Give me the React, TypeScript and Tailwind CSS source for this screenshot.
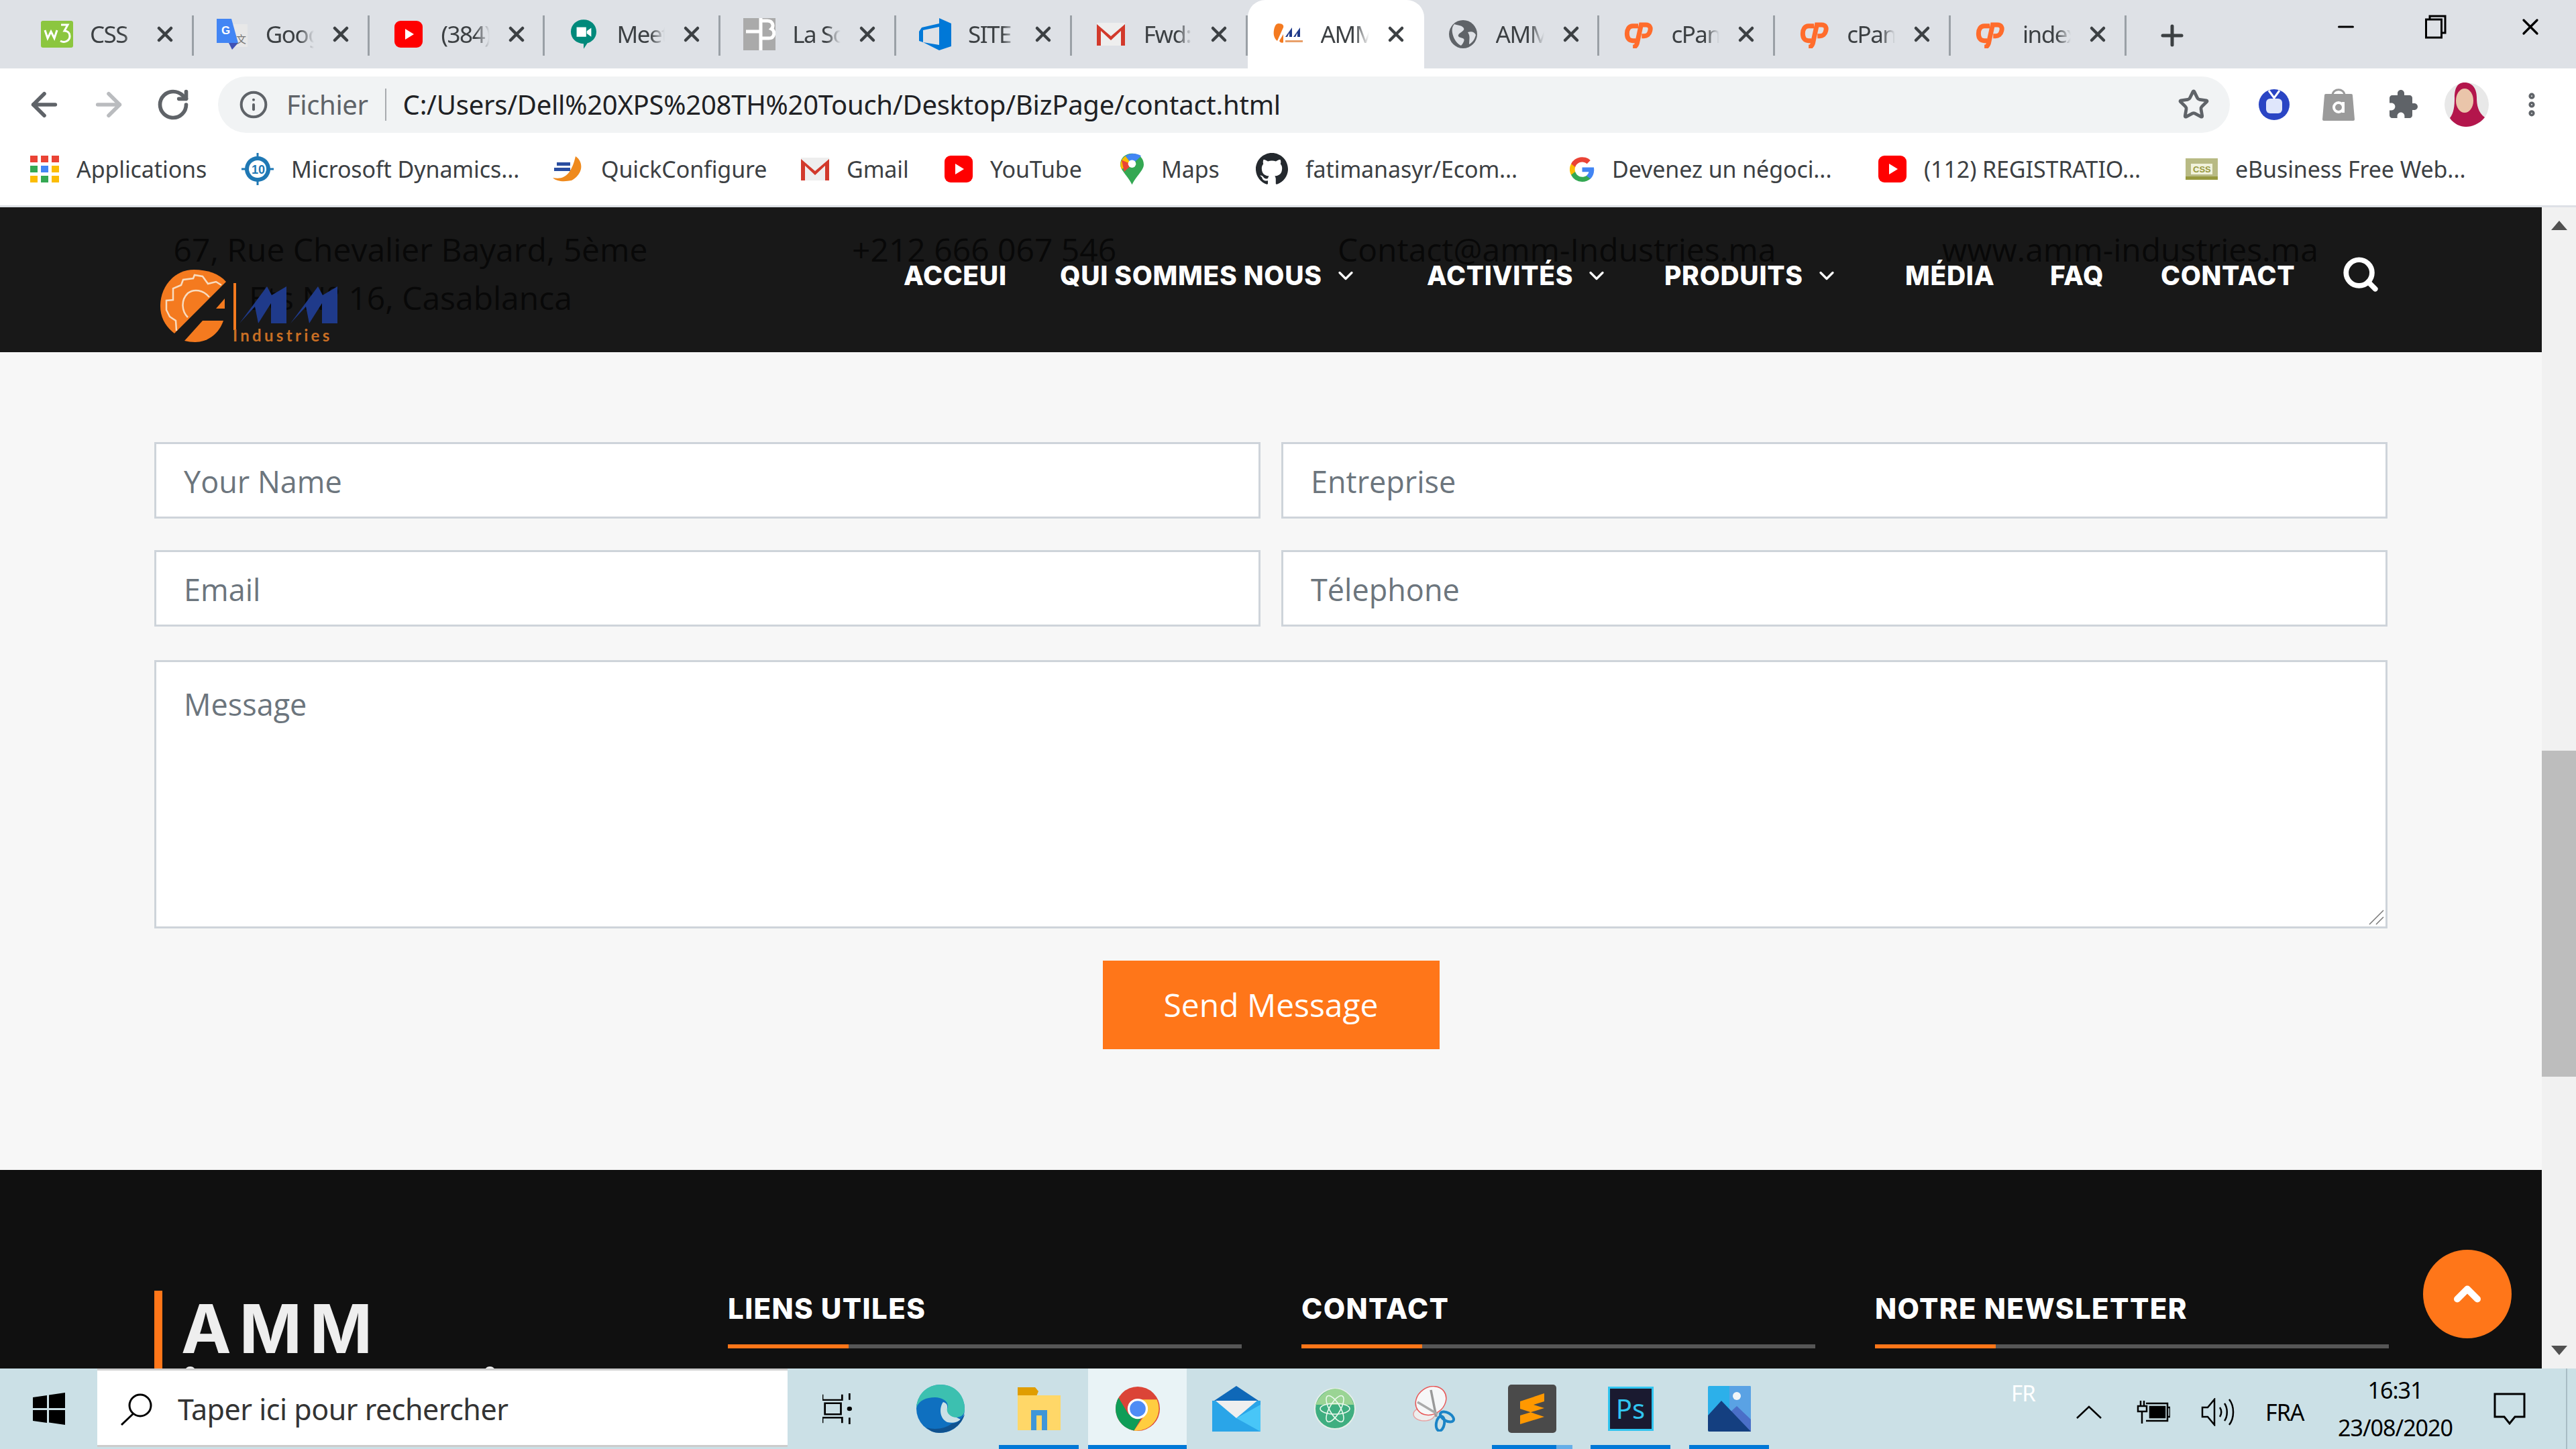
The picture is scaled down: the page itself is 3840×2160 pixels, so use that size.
import React from "react";
import { ArrowLeft, ArrowRight, RotateCw, Info, Star, MoreVertical, Plus, X, Minus, ChevronDown, ChevronUp, Search } from "lucide-react";

const CP = () => (
  <svg viewBox="0 0 48 48" className="w-[48px] h-[42px]" fill="none" stroke="#ff6c2c" strokeWidth="8">
    <path d="M24 10H15C8 10 5 16 5 23s3 12 10 12h5" />
    <path d="M15 46c5 0 6-3 7-6l7-32h8c7 0 9 5 7 11-1 5-5 8-10 8h-4" />
  </svg>
);
const YT = () => (
  <svg viewBox="0 0 42 40" className="w-[42px] h-[40px]"><rect x="0" y="0" width="42" height="40" rx="9" fill="#ff0000" /><path d="M16 12 29 20 16 28z" fill="#fff" /></svg>
);
const GM = () => (
  <svg viewBox="0 0 42 34" className="w-[42px] h-[34px]"><path d="M0 0h42v34H0z" fill="#eee" /><path d="M0 34V2l21 18L42 2v32h-6V12L21 26 6 12v22z" fill="#d2392b" /></svg>
);
const AMMmini = () => (
  <svg viewBox="0 0 44 32" className="w-[44px] h-[32px]">
    <path d="M8 0c6 0 8 3 7 6L6 26C1 22 0 16 1 10c1-6 3-10 7-10z" fill="#f47a20" />
    <path d="M9 26l6-10v12c-2 2-5 0-6-2z" fill="#f47a20" />
    <path d="M18 20 28 6v14h-4v-6l-3 6zM30 20 40 6v14h-4v-6l-3 6z" fill="#1f3a8a" />
    <rect x="18" y="25" width="26" height="3" fill="#e9a06a" />
  </svg>
);

const tabs: { label: string; icon: React.ReactNode; active?: boolean }[] = [
  { label: "CSS", icon: <svg viewBox="0 0 48 40" className="w-[48px] h-[40px]"><rect width="48" height="40" rx="3" fill="#8cc63f" /><path d="M6 14l4 12 5-10 5 10 4-12" stroke="#fff" strokeWidth="3" fill="none" /><path d="M30 6h10l-5 9c5 0 8 3 8 8 0 6-7 11-14 7" stroke="#fff" strokeWidth="3" fill="none" /></svg> },
  { label: "Google", icon: <svg viewBox="0 0 48 46" className="w-[48px] h-[46px]"><path d="M18 8h28v34H24z" fill="#e8e8e8" /><path d="M0 0h22l10 36H0z" fill="#4285f4" /><path d="M18 36h14l-9 10z" fill="#3f51b5" /><text x="7" y="23" fontSize="17" fontWeight="700" fill="#fff" fontFamily="Liberation Sans">G</text><text x="29" y="36" fontSize="15" fill="#777" fontFamily="Noto Sans CJK SC">文</text></svg> },
  { label: "(384)", icon: <YT /> },
  { label: "Meet", icon: <svg viewBox="0 0 40 46" className="w-[38px] h-[44px]"><path d="M20 0c11 0 20 8 20 19 0 10-7 16-14 18l-6 9V38C8 37 0 30 0 19 0 8 9 0 20 0z" fill="#00897b" /><path d="M9 12h15v15H9z" fill="#fff" /><path d="M25 18l7-5v14l-7-5z" fill="#fff" /></svg> },
  { label: "La Société", icon: <svg viewBox="0 0 48 48" className="w-[48px] h-[48px]"><rect width="48" height="48" fill="#aaa" /><path d="M26 0v48M4 20h22M26 4h10c8 0 10 8 6 12 6 3 5 14-4 14H26" stroke="#fff" strokeWidth="5" fill="none" /></svg> },
  { label: "SITE", icon: <svg viewBox="0 0 48 48" className="w-[48px] h-[48px]"><path d="M30 0v8L4 14 0 20v14l6 2V18l24-5v27L6 36l24 12 18-6V8z" fill="#0078d7" /></svg> },
  { label: "Fwd:", icon: <GM /> },
  { label: "AMM", icon: <AMMmini />, active: true },
  { label: "AMM", icon: <svg viewBox="0 0 42 42" className="w-[42px] h-[42px]"><circle cx="21" cy="21" r="21" fill="#5f6368" /><path d="M8 6c6 2 12 2 14 6s-6 6-8 10 6 4 8 6-2 8-4 10C8 34 0 14 8 6zM28 18c6-2 10 0 12 4-2 8-6 12-10 14 0-8 2-12-2-18z" fill="#dee1e6" /></svg> },
  { label: "cPanel", icon: <CP /> },
  { label: "cPanel", icon: <CP /> },
  { label: "index", icon: <CP /> },
];

const bookmarks: { w: string; label: string; icon: React.ReactNode }[] = [
  { w: "w-[315px]", label: "Applications", icon: <div className="grid grid-cols-3 gap-[5px] w-[43px]">{["#ea4335","#ea4335","#ea4335","#34a853","#4285f4","#fbbc04","#fbbc04","#34a853","#fbbc04"].map((c,i)=><span key={i} className="h-[10px]" style={{background:c}} />)}</div> },
  { w: "w-[462px]", label: "Microsoft Dynamics...", icon: <svg viewBox="0 0 48 48" className="w-[48px] h-[48px]"><circle cx="24" cy="24" r="19" fill="#1f78b4" /><circle cx="24" cy="24" r="13" fill="#fff" /><path d="M24 0v9M24 39v9M0 24h9M39 24h9" stroke="#1f78b4" strokeWidth="3" /><text x="15" y="31" fontSize="18" fontWeight="700" fill="#1f78b4" fontFamily="Liberation Sans">10</text></svg> },
  { w: "w-[372px]", label: "QuickConfigure", icon: <svg viewBox="0 0 48 38" className="w-[48px] h-[38px]"><path d="M36 0c12 8 12 26-6 36-10 2-22 2-28-4 12 2 26 2 34-32z" fill="#ef8a1d" /><rect x="8" y="9" width="20" height="5" fill="#2a4ea0" /><rect x="4" y="17" width="24" height="5" fill="#2a4ea0" /></svg> },
  { w: "w-[214px]", label: "Gmail", icon: <GM /> },
  { w: "w-[262px]", label: "YouTube", icon: <YT /> },
  { w: "w-[202px]", label: "Maps", icon: <svg viewBox="0 0 36 48" className="w-[35px] h-[48px]"><path d="M18 0c10 0 18 7 18 17 0 9-12 18-18 31C12 35 0 26 0 17 0 7 8 0 18 0z" fill="#34a853" /><path d="M8 4 18 17 2 24C-2 16 2 8 8 4z" fill="#fbbc04" /><path d="M8 4c6-5 18-5 24 0L18 17z" fill="#4285f4" /><path d="M2 10 18 17 6 28z" fill="#ea4335" /><circle cx="18" cy="16" r="6" fill="#fff" /></svg> },
  { w: "w-[468px]", label: "fatimanasyr/Ecom...", icon: <svg viewBox="0 0 24 24" className="w-[48px] h-[48px]"><path fill="#24292e" d="M12 0C5.4 0 0 5.4 0 12c0 5.3 3.4 9.8 8.2 11.4.6.1.8-.3.8-.6v-2.2c-3.3.7-4-1.4-4-1.4-.5-1.4-1.3-1.8-1.3-1.8-1.1-.7.1-.7.1-.7 1.2.1 1.8 1.2 1.8 1.2 1.1 1.8 2.8 1.3 3.5 1 .1-.8.4-1.3.8-1.6-2.7-.3-5.5-1.3-5.5-5.9 0-1.3.5-2.4 1.2-3.2-.1-.3-.5-1.5.1-3.2 0 0 1-.3 3.3 1.2a11.5 11.5 0 0 1 6 0c2.3-1.6 3.3-1.2 3.3-1.2.7 1.7.2 2.9.1 3.2.8.8 1.2 1.9 1.2 3.2 0 4.6-2.8 5.6-5.5 5.9.4.4.8 1.1.8 2.2v3.3c0 .3.2.7.8.6A12 12 0 0 0 24 12c0-6.6-5.4-12-12-12z" /></svg> },
  { w: "w-[460px]", label: "Devenez un négoci...", icon: <svg viewBox="0 0 24 24" className="w-[37px] h-[37px]"><path d="M23.5 12.3c0-.8-.1-1.6-.2-2.3H12v4.5h6.5a5.5 5.5 0 0 1-2.4 3.6v3h3.9c2.3-2.1 3.5-5.2 3.5-8.8z" fill="#4285f4" /><path d="M12 24c3.2 0 6-1.1 8-2.9l-3.9-3c-1.1.7-2.5 1.2-4.1 1.2-3.1 0-5.8-2.1-6.7-5H1.3v3.1A12 12 0 0 0 12 24z" fill="#34a853" /><path d="M5.3 14.3a7.2 7.2 0 0 1 0-4.6V6.6H1.3a12 12 0 0 0 0 10.8z" fill="#fbbc04" /><path d="M12 4.8c1.8 0 3.3.6 4.6 1.8L20 3.2A12 12 0 0 0 1.3 6.6l4 3.1c.9-2.8 3.6-4.9 6.7-4.9z" fill="#ea4335" /></svg> },
  { w: "w-[458px]", label: "(112) REGISTRATIO...", icon: <YT /> },
  { w: "w-[400px]", label: "eBusiness Free Web...", icon: <svg viewBox="0 0 48 32" className="w-[48px] h-[32px]"><rect width="48" height="32" fill="#b8ba84" /><rect x="8" y="8" width="32" height="16" fill="#f1f2dc" /><rect y="27" width="48" height="5" fill="#97993f" /><text x="11" y="21" fontSize="13" fontWeight="700" fill="#97993f" fontFamily="Liberation Sans">CSS</text></svg> },
];

const Tab = ({ t }: { t: (typeof tabs)[number] }) => (
  <div className={t.active ? "w-[263px] h-[102px] bg-white rounded-t-[26px] flex items-center pl-[36px] shrink-0" : "w-[261.800px] h-[102px] flex items-center pl-[34px] shrink-0 relative"}>
    <div className="w-[48px] h-[60px] flex items-center justify-center shrink-0">{t.icon}</div>
    <span className="ml-[25px] w-[72px] overflow-hidden whitespace-nowrap text-[35px] tracking-[-1.5px] text-[#3c4043] [mask-image:linear-gradient(90deg,#000_70%,transparent)]">{t.label}</span>
    <X className="ml-[22px] w-[36px] h-[40px] text-[#3c4043] shrink-0" strokeWidth={3} />
    {!t.active && <span className="absolute right-0 top-[23px] w-[3px] h-[60px] bg-[#9aa0a6]" />}
  </div>
);

const Logo = () => (
  <svg viewBox="0 0 265 110" className="w-[265px] h-[110px]">
    <path d="M50 0C70 0 88 6 98 18L21 95C8 85 0 72 0 54 0 24 22 0 50 0z" fill="#f47a1f" />
    <path d="M83 58 96 43V58z" fill="#f47a1f" />
    <path d="M63 76H94C88 94 72 108 52 108 46 108 41 107 36 106z" fill="#f47a1f" />
    <path d="M24 91 23 76 14 70 9 60V46L19 45V28L31 23 34 15 49 13 51 8 63 10 71 21 83 18 91 23M41 71C32 62 30 46 41 35 50 28 64 30 73 41" stroke="#f8dcc0" strokeWidth="2.500" fill="none" />
    <rect x="109" y="20" width="4" height="70" fill="#f47a1f" />
    <path d="M118 80 159 25 166 38 188 25V80H165V50L146 80 141 55ZM194 80 235 25 242 38 264 25V80H241V50L222 80 217 55Z" fill="#1f3a8a" />
    <text x="108" y="107" fontSize="24" letterSpacing="4.300" fill="#c96f24" fontFamily="Lato, sans-serif" fontWeight="700">Industries</text>
  </svg>
);

const Field = ({ label, className }: { label: string; className: string }) => (
  <div className={"bg-white border-[3px] border-[#ced4da] flex items-center pl-[41px] pt-[3px] text-[45px] text-[#6c757d] " + className}>{label}</div>
);

const NavItem = ({ label, w, arrow }: { label: string; w: string; arrow?: boolean }) => (
  <div className={"flex items-center shrink-0 " + w}>
    <span className="text-[39px] font-extrabold tracking-[0.7px] text-white whitespace-nowrap">{label}</span>
    {arrow && <ChevronDown className="ml-[14px] w-[42px] h-[36px] text-white" strokeWidth={2.2} />}
  </div>
);

const FootCol = ({ title }: { title: string }) => (
  <div className="w-[766px]">
    <h3 className="text-[42px] leading-[54px] font-extrabold tracking-[1.4px] text-white font-['Inter',sans-serif]">{title}</h3>
    <div className="mt-[26px] h-[6px] bg-[#565656]"><div className="h-full w-[180px] bg-[#ff7619]" /></div>
  </div>
);

const taskIcon = "flex items-center justify-center w-[147px] h-[120px] shrink-0 relative";
const Under = ({ cls }: { cls?: string }) => <span className={"absolute bottom-0 left-[14px] right-[14px] h-[6px] bg-[#0078d7] " + (cls ?? "")} />;

export default function App() {
  return (
    <div className="w-[3840px] h-[2160px] flex flex-col overflow-hidden bg-white font-['Noto_Sans','Open_Sans',sans-serif]">
      {/* tab strip */}
      <div className="h-[102px] bg-[#dee1e6] flex items-start pl-[27px] shrink-0">
        {tabs.map((t, i) => <Tab key={i} t={t} />)}
        <Plus className="ml-[44px] mt-[29px] w-[48px] h-[48px] text-[#3c4043]" strokeWidth={2.5} />
        <div className="ml-auto flex h-[80px] items-center text-black">
          <Minus className="w-[36px] h-[36px] mr-[100px]" strokeWidth={2} />
          <svg viewBox="0 0 32 36" className="w-[32px] h-[36px] mr-[105px]" fill="none" stroke="#000" strokeWidth="3"><rect x="1.500" y="7" width="23" height="27" /><path d="M7 7V2h23v25h-5" /></svg>
          <X className="w-[40px] h-[40px] mr-[48px]" strokeWidth={2} />
        </div>
      </div>

      {/* toolbar */}
      <div className="h-[96px] pt-[12px] flex items-start shrink-0 bg-white">
        <div className="flex items-center h-[84px] pl-[38px] gap-[40px] w-[325px]">
          <ArrowLeft className="w-[56px] h-[56px] text-[#5f6368]" strokeWidth={2.4} />
          <ArrowRight className="w-[56px] h-[56px] text-[#babcbf]" strokeWidth={2.4} />
          <RotateCw className="w-[52px] h-[52px] ml-[2px] text-[#5f6368]" strokeWidth={2.6} />
        </div>
        <div className="w-[2999px] h-[84px] rounded-full bg-[#f1f3f4] flex items-center pl-[31px] pr-[30px]">
          <Info className="w-[44px] h-[44px] text-[#5f6368]" strokeWidth={2.2} />
          <span className="ml-[27px] text-[40px] tracking-[-0.4px] text-[#5f6368]">Fichier</span>
          <span className="ml-[25px] w-[2px] h-[48px] bg-[#a8abaf]" />
          <span className="ml-[25px] text-[40px] tracking-[-0.25px] text-[#202124] whitespace-nowrap">C:/Users/Dell%20XPS%208TH%20Touch/Desktop/BizPage/contact.html</span>
          <Star className="ml-auto w-[48px] h-[48px] text-[#5f6368]" strokeWidth={2.4} />
        </div>
        <div className="flex items-center h-[84px] flex-1">
          <svg viewBox="0 0 46 48" className="ml-[43px] w-[46px] h-[48px]"><circle cx="23" cy="24" r="23" fill="#2a45c4" /><rect x="11" y="15" width="24" height="22" rx="6" fill="#dfe6fb" /><path d="M15 3l8 11 8-11" stroke="#fff" strokeWidth="3" fill="none" /></svg>
          <svg viewBox="0 0 48 48" className="ml-[49px] w-[48px] h-[48px]"><path d="M5 8h38q2 0 2 2l3 36q0 2-2 2H2q-2 0-2-2L3 10q0-2 2-2z" fill="#9a9a9a" /><path d="M15 10c0-11 18-11 18 0" stroke="#9a9a9a" strokeWidth="3" fill="none" /><circle cx="24" cy="28" r="7" stroke="#fff" strokeWidth="4" fill="none" /><path d="M31 20v16" stroke="#fff" strokeWidth="4" /></svg>
          <svg viewBox="0 0 24 24" className="ml-[48px] w-[48px] h-[48px] fill-[#5f6368]"><path d="M20.5 11H19V7c0-1.100-.9-2-2-2h-4V3.500C13 2.120 11.880 1 10.500 1S8 2.120 8 3.500V5H4c-1.100 0-1.990.9-1.990 2v3.800H3.500c1.490 0 2.700 1.210 2.700 2.700s-1.210 2.700-2.700 2.700H2V20c0 1.100.9 2 2 2h3.800v-1.500c0-1.490 1.210-2.700 2.700-2.700 1.490 0 2.700 1.210 2.700 2.700V22H17c1.100 0 2-.9 2-2v-4h1.500c1.380 0 2.500-1.120 2.500-2.500S21.880 11 20.500 11z" /></svg>
          <svg viewBox="0 0 66 66" className="ml-[38px] w-[66px] h-[66px]"><circle cx="33" cy="33" r="33" fill="#e8e8e8" /><path d="M30 0c12 0 18 10 18 22 0 12 2 22 12 30-8 10-20 14-28 14S14 62 8 53c6-8 7-18 7-30C15 10 18 0 30 0z" fill="#b3164c" /><ellipse cx="30" cy="27" rx="13" ry="18" fill="#eac5aa" /></svg>
          <MoreVertical className="ml-[42px] w-[44px] h-[48px] text-[#5f6368]" strokeWidth={3} />
        </div>
      </div>

      {/* bookmarks */}
      <div className="h-[108px] flex items-center pl-[45px] shrink-0 bg-white border-b-[3px] border-[#dee1e6] box-content">
        {bookmarks.map((b, i) => (
          <div key={i} className={"flex items-center shrink-0 " + b.w}>
            <div className="flex justify-start shrink-0">{b.icon}</div>
            <span className="ml-[26px] text-[34px] tracking-[-0.1px] text-[#3c4043] whitespace-nowrap">{b.label}</span>
          </div>
        ))}
      </div>

      {/* viewport */}
      <div className="h-[1731px] flex shrink-0 overflow-hidden">
        <div className="w-[3789px] h-full flex flex-col relative overflow-hidden bg-[#f7f7f7] font-['Open_Sans','Noto_Sans',sans-serif]">
          <header className="h-[216px] bg-[#181818] relative shrink-0 flex items-start pl-[1347px] pt-[70px]">
            <div className="absolute left-[0] top-0 w-full text-[#080808] text-[48px] leading-[72px] whitespace-nowrap">
              <div className="absolute left-[232px] top-[27px] w-[760px] text-center">67, Rue Chevalier Bayard, 5ème<br />Ets N° 16, Casablanca</div>
              <div className="absolute left-[1270px] top-[27px]">+212 666 067 546</div>
              <div className="absolute left-[1994px] top-[27px]">Contact@amm-Industries.ma</div>
              <div className="absolute left-[2895px] top-[27px]">www.amm-industries.ma</div>
            </div>
            <div className="absolute left-[239px] top-[93px]"><Logo /></div>
            <div className="relative flex items-center h-[64px] font-['Inter',sans-serif]">
              <NavItem label="ACCEUI" w="w-[233px]" />
              <NavItem label="QUI SOMMES NOUS" w="w-[547px]" arrow />
              <NavItem label="ACTIVITÉS" w="w-[354px]" arrow />
              <NavItem label="PRODUITS" w="w-[359px]" arrow />
              <NavItem label="MÉDIA" w="w-[216px]" />
              <NavItem label="FAQ" w="w-[165px]" />
              <NavItem label="CONTACT" w="w-[269px]" />
              <Search className="w-[58px] h-[58px] -mt-[4px] text-white" strokeWidth={3.2} />
            </div>
          </header>

          <main className="px-[230px] pt-[134px] h-[1219px] shrink-0 flex flex-col items-center">
            <div className="w-full grid grid-cols-2 gap-x-[31px] gap-y-[47px]">
              <Field label="Your Name" className="h-[114px]" />
              <Field label="Entreprise" className="h-[114px]" />
              <Field label="Email" className="h-[114px]" />
              <Field label="Télephone" className="h-[114px]" />
            </div>
            <div className="w-full mt-[50px] h-[400px] bg-white border-[3px] border-[#ced4da] pl-[41px] pt-[31px] text-[45px] leading-[64px] text-[#6c757d] relative">
              Message
              <svg viewBox="0 0 24 24" className="absolute right-[2px] bottom-[2px] w-[24px] h-[24px]" stroke="#777" strokeWidth="1.500"><path d="M23 2 2 23M23 12 12 23" /></svg>
            </div>
            <button className="mt-[48px] w-[502px] h-[132px] bg-[#ff7619] text-white text-[48px]">Send Message</button>
          </main>

          <footer className="flex-1 bg-[#101010] flex pl-[230px] pt-[180px] relative">
            <div className="w-[855px] h-[200px] border-l-[12px] border-[#ff7619] pl-[28px] pt-[8px] text-[#eeeeee] text-[100px] leading-[97px] font-bold tracking-[12px] font-['Inter',sans-serif]">
              AMM<br /><span className="tracking-[14px]">industries</span>
            </div>
            <div className="flex gap-[89px]">
              <FootCol title="LIENS UTILES" />
              <FootCol title="CONTACT" />
              <FootCol title="NOTRE NEWSLETTER" />
            </div>
            <div className="absolute left-[3612px] top-[119px] w-[132px] h-[132px] rounded-full bg-[#ff7619] flex items-center justify-center">
              <ChevronUp className="w-[60px] h-[60px] text-white" strokeWidth={4} />
            </div>
          </footer>
        </div>

        {/* scrollbar */}
        <div className="w-[51px] bg-[#f1f1f1] flex flex-col items-center justify-between py-[20px] relative shrink-0">
          <svg viewBox="0 0 24 14" className="w-[24px] h-[14px] fill-[#505050]"><path d="M12 0 24 14H0z" /></svg>
          <svg viewBox="0 0 24 14" className="w-[24px] h-[14px] fill-[#505050]"><path d="M12 14 24 0H0z" /></svg>
          <div className="absolute left-0 right-0 top-[810px] h-[486px] bg-[#bdbdbd]" />
        </div>
      </div>

      {/* taskbar */}
      <div className="h-[120px] bg-[#cbe0e6] flex items-stretch shrink-0 relative font-['Noto_Sans',sans-serif]">
        <div className="w-[145px] flex items-center justify-center shrink-0">
          <svg viewBox="0 0 48 48" className="w-[48px] h-[48px] fill-black"><path d="M0 7l21-3v19H0zM24 3.500 48 0v23H24zM0 26h21v19L0 42zM24 26h24v22l-24-3.500z" /></svg>
        </div>
        <div className="w-[1029px] h-[117px] bg-white border-y-[3px] border-[#cccccc] flex items-center pl-[34px] pt-[5px] shrink-0 text-[43px] tracking-[-0.5px] text-[#333]">
          <svg viewBox="0 0 50 48" className="w-[50px] h-[48px]" fill="none" stroke="#000" strokeWidth="3"><circle cx="30" cy="18" r="16" /><path d="M20 30 2 47" /></svg>
          <span className="ml-[36px]">Taper ici pour rechercher</span>
        </div>
        <div className="flex pl-[7px]">
          <div className={taskIcon + " pr-[14px]"}>
            <svg viewBox="0 0 48 56" preserveAspectRatio="none" className="w-[44px] h-[46px]" fill="none" stroke="#000" strokeWidth="3"><path d="M0 2v10h32V2M4 18h26v20H4zM0 54V44h32v10M44 0v12M44 44v12" /><circle cx="44" cy="28" r="4" fill="#000" stroke="none" /></svg>
          </div>
          <div className={taskIcon}>
            <svg viewBox="0 0 72 72" className="w-[72px] h-[72px]"><circle cx="36" cy="36" r="36" fill="#0f70c0" /><path d="M0 34C2 12 18 0 36 0c22 0 36 16 36 36 0 8-4 13-14 13-8 0-14-2-14-8 0-3 3-5 3-9 0-8-10-13-19-13C14 19 4 24 0 34z" fill="#3cc0b0" /><path d="M40 26c-6 8-6 24 6 30 8 2 16 0 20-4l-6-3c-8 0-16-6-14-14 1-5-2-8-6-9z" fill="#cbe0e6" /><path d="M72 44c-4 16-20 28-38 28-8 0-14-3-19-8 12 4 28 2 38-6 6 0 13-4 19-14z" fill="#10528f" /></svg>
          </div>
          <div className={taskIcon}>
            <svg viewBox="0 0 64 64" className="w-[64px] h-[64px]"><path d="M0 0h26l5 6-5 12H0z" fill="#e09d00" /><path d="M0 12h64v52H0z" fill="#ffd768" /><path d="M20 64V34h24v30h-8V42h-8v22z" fill="#3f96d8" /></svg>
            <Under />
          </div>
          <div className={taskIcon + " bg-[#e9f3f6]"}>
            <svg viewBox="0 0 24 24" className="w-[66px] h-[66px]"><circle cx="12" cy="12" r="12" fill="#db4437" /><path d="M1.600 6A12 12 0 0 0 10 23.800L14.500 16 7 15z" fill="#0f9d58" /><path d="M12 7h10.400A12 12 0 0 1 10 23.800L16.300 14.500z" fill="#ffcd40" /><circle cx="12" cy="12" r="5.500" fill="#fff" /><circle cx="12" cy="12" r="4.300" fill="#4e8cf5" /></svg>
            <Under cls="!left-0 !right-0" />
          </div>
          <div className={taskIcon}>
            <svg viewBox="0 0 72 68" className="w-[72px] h-[68px]"><path d="M36 0 72 24v44H0V24z" fill="#0f68b8" /><path d="M0 22h72v46H0z" fill="#2aa5e8" /><path d="M5 22h62L36 48z" fill="#efefef" /><path d="M36 48 72 68V28z" fill="#48c6f8" /></svg>
          </div>
          <div className={taskIcon}>
            <svg viewBox="0 0 62 64" className="w-[62px] h-[64px]" fill="none"><circle cx="31" cy="32" r="30" fill="#3fae80" stroke="#e6eee9" strokeWidth="2" /><path d="M2 26C8 10 22 2 31 2c12 0 24 8 28 24z" fill="#9ad494" /><g stroke="#e9f8ec" strokeWidth="1.600"><ellipse cx="31" cy="32" rx="22" ry="8" transform="rotate(60 31 32)" /><ellipse cx="31" cy="32" rx="22" ry="8" transform="rotate(-60 31 32)" /><ellipse cx="31" cy="32" rx="22" ry="8" /></g></svg>
          </div>
          <div className={taskIcon}>
            <svg viewBox="0 0 64 68" className="w-[64px] h-[68px]" fill="none"><ellipse cx="18" cy="42" rx="16" ry="10" fill="#eee" stroke="#e8a0a0" strokeWidth="1.500" /><ellipse cx="28" cy="22" rx="24" ry="20" fill="#f6f7f8" stroke="#e85858" strokeWidth="1.500" transform="rotate(-35 28 22)" /><path d="M28 6l8 40" stroke="#999" strokeWidth="3.500" /><path d="M8 24l30 18" stroke="#aaa" strokeWidth="3.500" /><ellipse cx="42" cy="56" rx="6" ry="11" stroke="#1b84c6" strokeWidth="4" transform="rotate(10 42 56)" /><ellipse cx="52" cy="46" rx="6" ry="11" stroke="#1b84c6" strokeWidth="4" transform="rotate(-60 52 46)" /></svg>
          </div>
          <div className={taskIcon}>
            <svg viewBox="0 0 72 72" className="w-[72px] h-[72px]"><rect width="72" height="72" rx="5" fill="#4a4a4a" /><path d="M54 13 18 25V36L54 48 18 59V46L54 35 38 30 54 25z" fill="#ff9800" /></svg>
            <span className="absolute bottom-0 left-[14px] w-[96px] h-[6px] bg-[#0078d7]" /><span className="absolute bottom-0 left-[110px] w-[24px] h-[6px] bg-[#66aee8]" />
          </div>
          <div className={taskIcon}>
            <div className="w-[68px] h-[66px] bg-[#1a1a30] border-[3px] border-[#31c5f0] flex items-center justify-center text-[#31c5f0] text-[40px] leading-none">Ps</div>
            <Under />
          </div>
          <div className={taskIcon}>
            <svg viewBox="0 0 64 68" className="w-[64px] h-[68px]"><rect width="64" height="68" rx="2" fill="#2cb0ea" /><path d="M32 0h30q2 0 2 2v50H32z" fill="#5aa2e4" /><circle cx="43" cy="15" r="6" fill="#f2f5f8" /><path d="M30 42 43 30 64 50V68H40z" fill="#4a6fc8" /><path d="M0 44 20 22 64 68H2q-2 0-2-2z" fill="#143f80" /></svg>
            <Under />
          </div>
        </div>
        {/* tray */}
        <div className="absolute left-[2998px] top-[12px] text-[33px] tracking-[-1px] text-white">FR</div>
        <div className="ml-[444px] flex items-center gap-0 text-black relative">
          <svg viewBox="0 0 38 20" className="w-[38px] h-[20px] mt-[10px]" fill="none" stroke="#000" strokeWidth="2.500"><path d="M1 19 19 2l18 17" /></svg>
          <svg viewBox="0 0 50 34" className="ml-[52px] w-[50px] h-[34px] mt-[10px]" fill="none" stroke="#000" strokeWidth="2.500"><path d="M6 0v8M11 0v8M2 8h13v8H2zM8 16v18M14 4h32v26H14M46 10h4v14h-4" /><rect x="20" y="9" width="22" height="16" fill="#000" /></svg>
          <svg viewBox="0 0 50 42" className="ml-[46px] w-[50px] h-[42px] mt-[10px]" fill="none" stroke="#000" strokeWidth="2.500"><path d="M2 14h8L20 2v38L10 28H2zM28 14c3 4 3 10 0 14M35 8c5 7 5 19 0 26M42 2c8 10 8 28 0 38" /></svg>
          <span className="ml-[46px] text-[34px] tracking-[-1px] mt-[10px]">FRA</span>
          <div className="ml-[41px] w-[190px] text-center text-[34px] tracking-[-1px] leading-[56px]">16:31<br />23/08/2020</div>
          <svg viewBox="0 0 48 48" className="ml-[51px] w-[48px] h-[48px]" fill="none" stroke="#000" strokeWidth="3"><path d="M2 2h44v34H32l-8 10-8-10H2z" /></svg>
          <span className="absolute right-[-62px] top-0 bottom-0 w-[2px] bg-[#a8bcc4]" />
        </div>
      </div>
    </div>
  );
}
